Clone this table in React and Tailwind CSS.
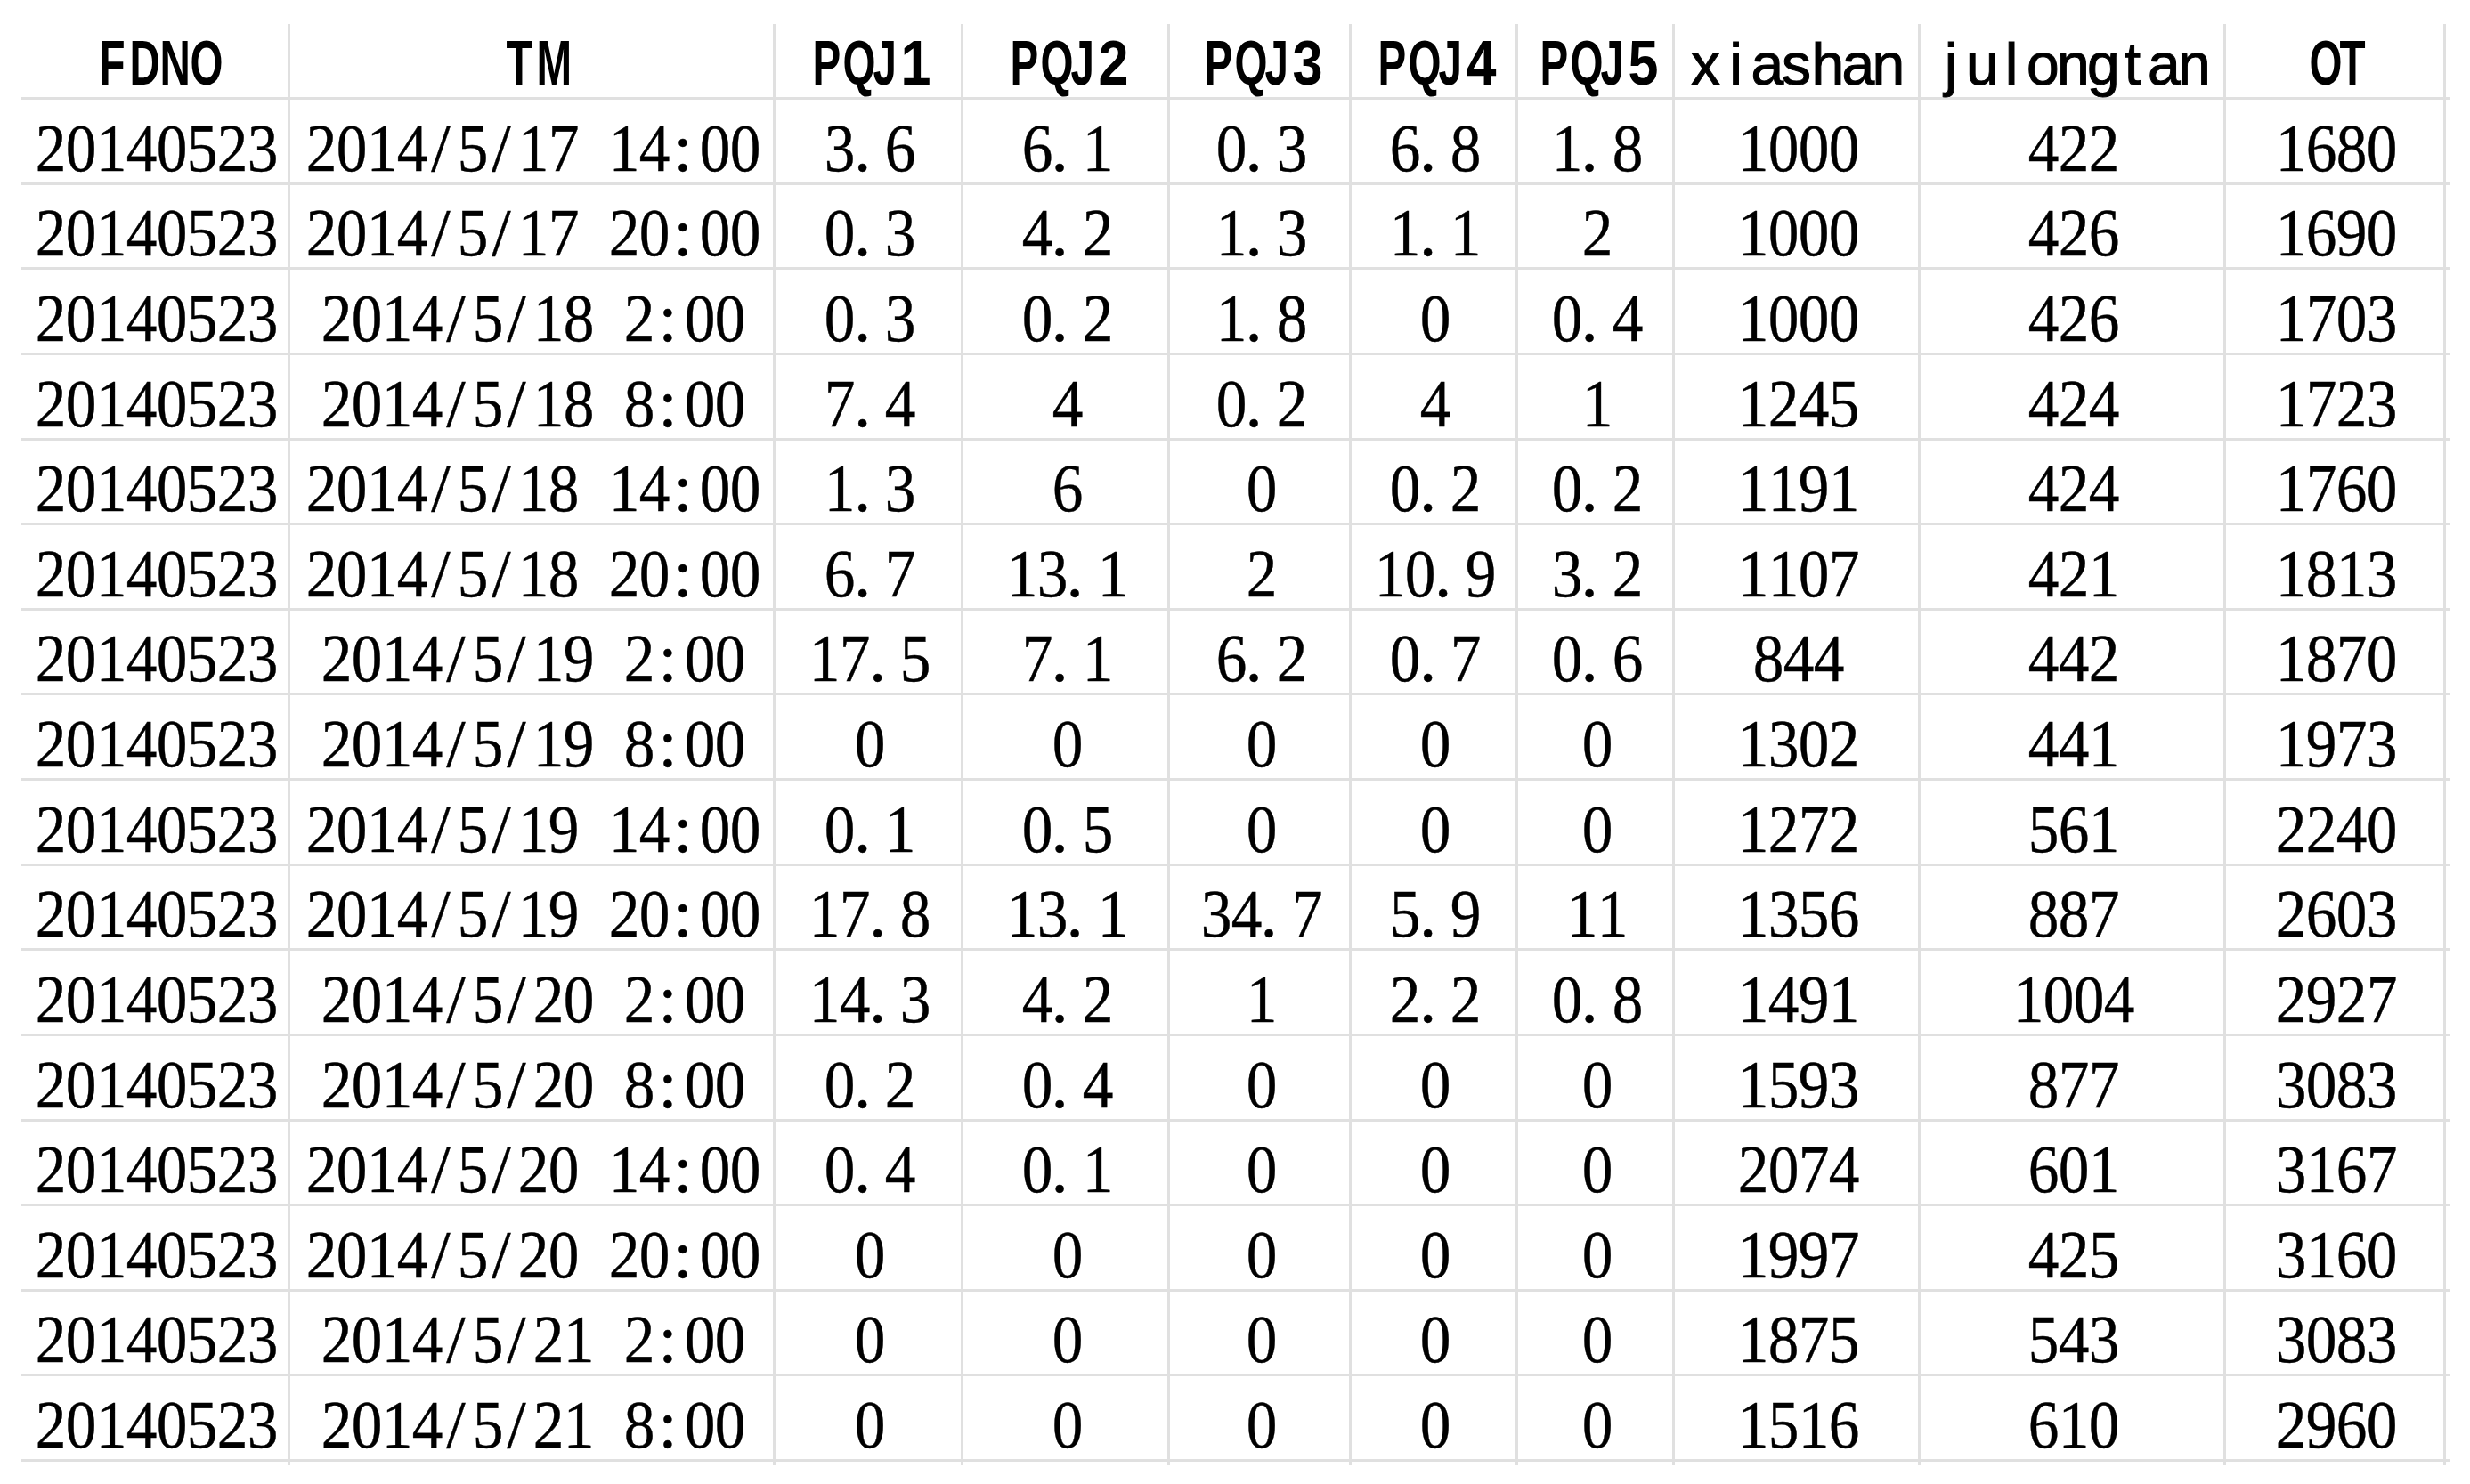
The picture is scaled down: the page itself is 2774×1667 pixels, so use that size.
import React from "react";

const HEADERS = ["FDNO", "TM", "PQJ1", "PQJ2", "PQJ3", "PQJ4", "PQJ5", "xiashan", "julongtan", "OT"];

const ROWS = [
  ["20140523", "2014/5/17 14:00", "3.6", "6.1", "0.3", "6.8", "1.8", "1000", "422", "1680"],
  ["20140523", "2014/5/17 20:00", "0.3", "4.2", "1.3", "1.1", "2", "1000", "426", "1690"],
  ["20140523", "2014/5/18 2:00", "0.3", "0.2", "1.8", "0", "0.4", "1000", "426", "1703"],
  ["20140523", "2014/5/18 8:00", "7.4", "4", "0.2", "4", "1", "1245", "424", "1723"],
  ["20140523", "2014/5/18 14:00", "1.3", "6", "0", "0.2", "0.2", "1191", "424", "1760"],
  ["20140523", "2014/5/18 20:00", "6.7", "13.1", "2", "10.9", "3.2", "1107", "421", "1813"],
  ["20140523", "2014/5/19 2:00", "17.5", "7.1", "6.2", "0.7", "0.6", "844", "442", "1870"],
  ["20140523", "2014/5/19 8:00", "0", "0", "0", "0", "0", "1302", "441", "1973"],
  ["20140523", "2014/5/19 14:00", "0.1", "0.5", "0", "0", "0", "1272", "561", "2240"],
  ["20140523", "2014/5/19 20:00", "17.8", "13.1", "34.7", "5.9", "11", "1356", "887", "2603"],
  ["20140523", "2014/5/20 2:00", "14.3", "4.2", "1", "2.2", "0.8", "1491", "1004", "2927"],
  ["20140523", "2014/5/20 8:00", "0.2", "0.4", "0", "0", "0", "1593", "877", "3083"],
  ["20140523", "2014/5/20 14:00", "0.4", "0.1", "0", "0", "0", "2074", "601", "3167"],
  ["20140523", "2014/5/20 20:00", "0", "0", "0", "0", "0", "1997", "425", "3160"],
  ["20140523", "2014/5/21 2:00", "0", "0", "0", "0", "0", "1875", "543", "3083"],
  ["20140523", "2014/5/21 8:00", "0", "0", "0", "0", "0", "1516", "610", "2960"],
];

function DataText({ text }) {
  return (
    <span className="inline-block whitespace-pre font-['Liberation_Serif',serif] text-[77px] leading-none text-black [-webkit-text-stroke:0.4px_#000]">
      {text.split("").map((c, i) => {
        if (c === ".")
          return (
            <span key={i} className="inline-block w-[34px] pl-[1px] text-left">
              .
            </span>
          );
        if (/[0-9]/.test(c))
          return (
            <span key={i} className="inline-block w-[34px] text-center scale-x-[0.9]">
              {c}
            </span>
          );
        return (
          <span key={i} className="inline-block w-[34px] text-center">
            {c}
          </span>
        );
      })}
    </span>
  );
}

function HeaderText({ text }) {
  const lower = text === text.toLowerCase();
  return (
    <span
      className={
        lower
          ? "inline-block whitespace-pre font-['Liberation_Sans',sans-serif] text-[66px] leading-none text-black [-webkit-text-stroke:1px_#000]"
          : "inline-block whitespace-pre font-['Liberation_Sans',sans-serif] text-[71px] font-bold leading-none text-black"
      }
    >
      {text.split("").map((c, i) => {
        let cls = "inline-block w-[34px] text-center";
        if (/[A-Z]/.test(c)) cls = "inline-block w-[34px] text-center scale-x-[0.67]";
        else if (/[0-9]/.test(c)) cls = "inline-block w-[34px] text-center scale-x-[0.86]";
        return (
          <span key={i} className={cls}>
            {c}
          </span>
        );
      })}
    </span>
  );
}

export default function App() {
  return (
    <div className="min-h-screen bg-white pt-[27px] pl-[24px]">
      <div className="grid w-[2728px] grid-cols-[299px_545px_211px_232px_204px_187px_176px_276px_343px_247px_8px]">
        {HEADERS.map((h, i) => (
          <div
            key={"h" + i}
            className={
              i === 0
                ? "flex h-[85px] items-end justify-center border-b-[3px] border-[#e0e0e0] pb-[3px]"
                : h === h.toLowerCase()
                ? "flex h-[85px] items-end justify-center border-b-[3px] border-l-[3px] border-[#e0e0e0] pb-[4px]"
                : "flex h-[85px] items-end justify-center border-b-[3px] border-l-[3px] border-[#e0e0e0] pb-[3px]"
            }
          >
            <HeaderText text={h} />
          </div>
        ))}
        <div className="h-[85px] border-b-[3px] border-l-[3px] border-[#e0e0e0]" />

        {ROWS.map((row, r) => (
          <React.Fragment key={"r" + r}>
            {row.map((c, i) => (
              <div
                key={i}
                className={
                  i === 0
                    ? "flex h-[95.625px] items-end justify-center border-b-[3px] border-[#e0e0e0]"
                    : "flex h-[95.625px] items-end justify-center border-b-[3px] border-l-[3px] border-[#e0e0e0]"
                }
              >
                <DataText text={c} />
              </div>
            ))}
            <div className="h-[95.625px] border-b-[3px] border-l-[3px] border-[#e0e0e0]" />
          </React.Fragment>
        ))}

        {Array.from({ length: 11 }).map((_, i) => (
          <div
            key={"t" + i}
            className={i === 0 ? "h-[4px]" : "h-[4px] border-l-[3px] border-[#e0e0e0]"}
          />
        ))}
      </div>
    </div>
  );
}
